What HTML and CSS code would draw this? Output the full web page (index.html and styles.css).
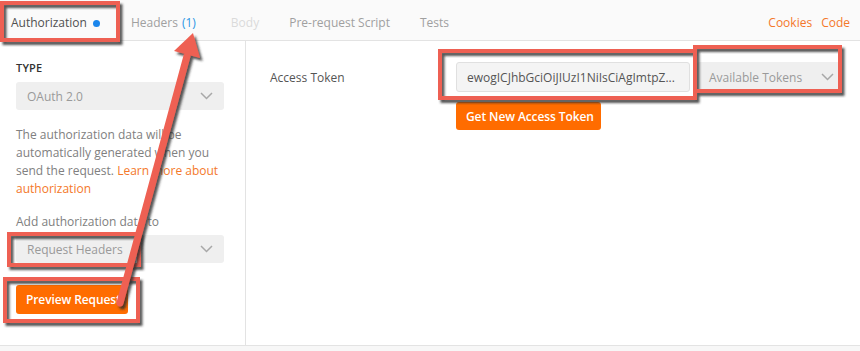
FILE: index.html
```html
<!DOCTYPE html>
<html>
<head>
<meta charset="utf-8">
<link rel="stylesheet" href="styles.css">
</head>
<body>
<div class="app">
  <div class="tabs">
    <span class="tab tab-active">Authorization<span class="dot"></span></span>
    <span class="tab">Headers <span class="count">(1)</span></span>
    <span class="tab tab-disabled">Body</span>
    <span class="tab">Pre-request Script</span>
    <span class="tab">Tests</span>
    <span class="tab-links"><span class="link">Cookies</span><span class="link">Code</span></span>
  </div>
  <div class="main">
    <div class="left">
      <div class="label">TYPE</div>
      <div class="select select-type"><span>OAuth 2.0</span><svg class="chev" width="13" height="8" viewBox="0 0 13 8"><polyline points="1,1 6.5,6.5 12,1" fill="none" stroke="#a8a8a8" stroke-width="1.5"/></svg></div>
      <p class="desc">The authorization data will be automatically generated when you send the request. <span class="orange">Learn more about authorization</span></p>
      <div class="add-label">Add authorization data to</div>
      <div class="select select-add"><span>Request Headers</span><svg class="chev" width="13" height="8" viewBox="0 0 13 8"><polyline points="1,1 6.5,6.5 12,1" fill="none" stroke="#a8a8a8" stroke-width="1.5"/></svg></div>
      <button class="btn btn-preview">Preview Request</button>
    </div>
    <div class="right">
      <div class="token-row">
        <div class="token-label">Access Token</div>
        <div class="token-controls">
          <div class="token-input">ewogICJhbGciOiJIUzI1NiIsCiAgImtpZ...</div>
          <div class="select select-tokens"><span>Available Tokens</span><svg class="chev" width="13" height="8" viewBox="0 0 13 8"><polyline points="1,1 6.5,6.5 12,1" fill="none" stroke="#a8a8a8" stroke-width="1.5"/></svg></div>
        </div>
        <div></div>
        <div><button class="btn btn-get">Get New Access Token</button></div>
      </div>
    </div>
  </div>
  <div class="footer"></div>
  <svg class="overlay" width="860" height="351" viewBox="0 0 860 351">
    <defs>
      <filter id="sh" x="-20%" y="-20%" width="140%" height="140%">
        <feDropShadow dx="2.5" dy="3" stdDeviation="1.2" flood-color="#2a2a2a" flood-opacity="0.8"/>
      </filter>
    </defs>
    <g fill="none" stroke="#ee6152" stroke-width="4" filter="url(#sh)">
      <rect x="2" y="3" width="116" height="37"/>
      <rect x="9" y="234" width="130" height="31"/>
      <rect x="5" y="279" width="133" height="42"/>
      <rect x="440" y="51" width="255" height="47"/>
      <rect x="695" y="47" width="145" height="44"/>
    </g>
    <g filter="url(#sh)">
      <line x1="120" y1="303" x2="187" y2="56" stroke="#ee6152" stroke-width="7" stroke-linecap="round"/>
      <polygon points="193,33 200,58 174,51" fill="#ee6152"/>
    </g>
  </svg>
</div>
</body>
</html>
```

FILE: styles.css
```css
* { box-sizing: border-box; }
html, body { margin: 0; padding: 0; }
body {
  font-family: "Open Sans", "Liberation Sans", sans-serif;
  font-size: 12px;
  color: #555;
  background: #fff;
}
.app {
  position: relative;
  width: 860px;
  height: 351px;
  overflow: hidden;
  background: #fff;
}
.tabs {
  height: 41px;
  display: flex;
  align-items: center;
  padding: 6px 10px 0 11px;
  background: #fafafa;
  border-bottom: 1px solid #e3e3e3;
  gap: 30px;
  line-height: 16px;
}
.tab { color: #a0a0a0; white-space: nowrap; display: flex; align-items: center; }
.tab-active { color: #505050; margin-right: 1px; }
.tab-disabled { color: #dadada; margin-left: 5px; }
.dot {
  display: inline-block;
  width: 7px;
  height: 7px;
  border-radius: 50%;
  background: #1a86ec;
  margin-left: 6px;
}
.count { color: #2a96e4; margin-left: 4px; }
.tab-links { margin-left: auto; display: flex; gap: 9px; }
.link { color: #f4782a; }
.main {
  display: flex;
  height: 304px;
}
.left {
  width: 246px;
  border-right: 1px solid #e3e3e3;
  padding: 19px 21px 0 16px;
}
.label {
  font-size: 11px;
  font-weight: 600;
  color: #333;
  line-height: 16px;
  letter-spacing: 0.2px;
}
.select {
  height: 28px;
  background: #efefef;
  border-radius: 3px;
  display: flex;
  align-items: center;
  justify-content: space-between;
  padding: 0 11px 0 11px;
  color: #9a9a9a;
  font-size: 12px;
  white-space: nowrap;
}
.select-type { margin-top: 6px; }
.desc {
  margin: 16px 0 0 0;
  line-height: 18px;
  color: #808080;
}
.orange { color: #f4782a; }
.add-label {
  margin-top: 15px;
  line-height: 18px;
  color: #808080;
}
.select-add { margin-top: 4px; }
.btn {
  font-family: "Open Sans", "Liberation Sans", sans-serif;
  font-size: 12px;
  font-weight: 600;
  color: #fff;
  background: #ff6c00;
  border: none;
  border-radius: 3px;
  height: 29px;
  padding: 0 10px;
  display: block;
  white-space: nowrap;
  overflow: hidden;
  text-align: left;
  letter-spacing: -0.1px;
}
.btn-preview { margin-top: 22px; width: 112px; }
.right {
  flex: 1;
  padding: 21px 0 0 24px;
}
.token-row {
  display: grid;
  grid-template-columns: 186px auto;
  row-gap: 10px;
}
.token-label {
  display: flex;
  align-items: center;
  color: #555;
  height: 30px;
}
.token-controls { display: flex; gap: 7px; }
.token-input {
  width: 234px;
  height: 30px;
  background: #f4f4f4;
  border: 1px solid #e0e0e0;
  border-radius: 3px;
  padding: 0 10px;
  display: flex;
  align-items: center;
  color: #555;
  white-space: nowrap;
  overflow: hidden;
}
.select-tokens { width: 143px; height: 30px; padding: 0 6px 0 12px; }
.btn-get { width: 145px; height: 28px; }
.footer {
  height: 6px;
  border-top: 1px solid #e3e3e3;
  background: #f7f7f7;
}
.overlay {
  position: absolute;
  left: 0;
  top: 0;
  pointer-events: none;
}
```
